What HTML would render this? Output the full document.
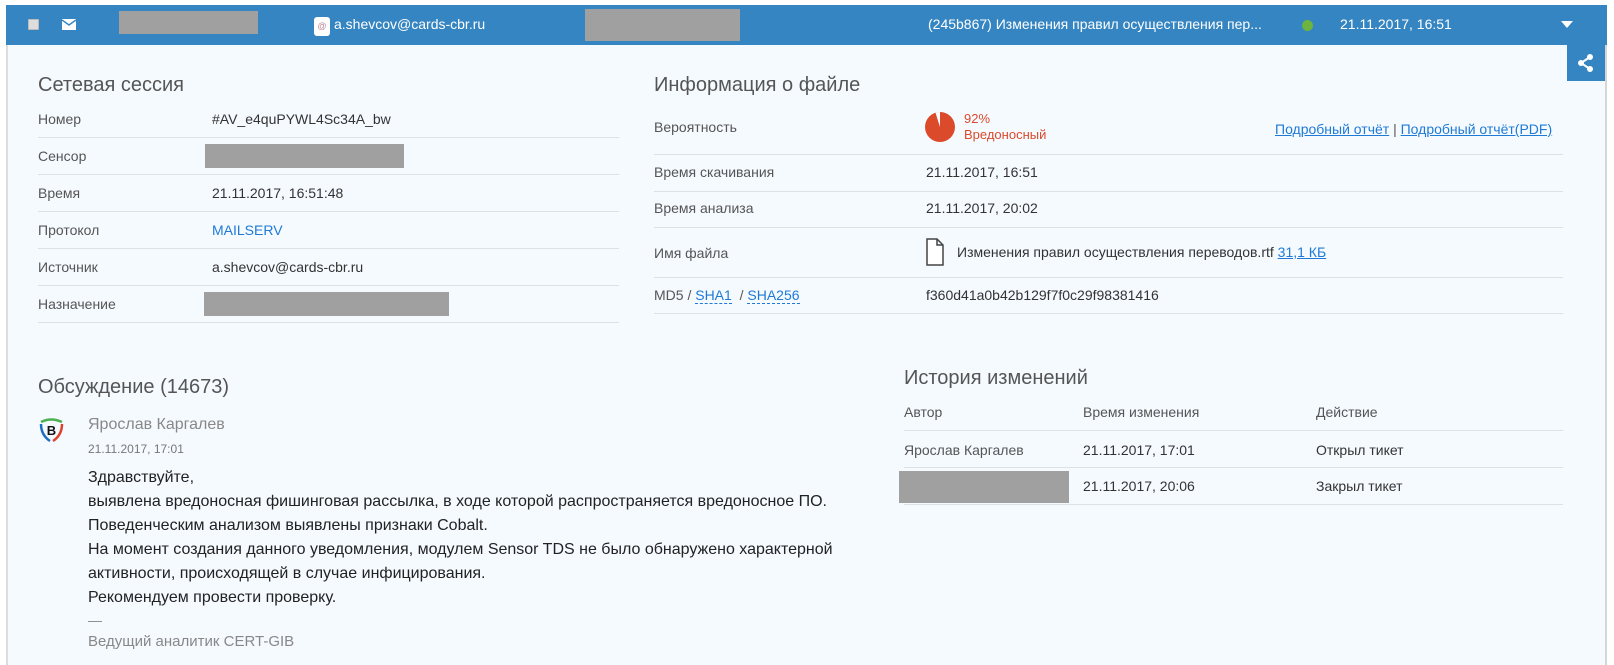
<!DOCTYPE html>
<html><head><meta charset="utf-8"><style>
*{box-sizing:border-box;margin:0;padding:0}
body{width:1614px;height:654px;background:#fff;font-family:"Liberation Sans","Noto Sans CJK SC",sans-serif;color:#333;position:relative;overflow:hidden;font-size:14px}
.a{position:absolute;white-space:nowrap}
#panel{position:absolute;left:6px;top:5px;width:1601px;height:660px;background:#f5faff;border-left:2px solid #ddd;border-right:2px solid #d6d6d6}
#bar{position:absolute;left:6px;top:5px;width:1601px;height:40px;background:#3485c1;color:#fff}
.grey{position:absolute;background:#a0a0a0}
.h{font-size:20px;color:#555;font-weight:300}
.line{position:absolute;height:1px;background:#dde1e5}
.lbl{color:#555;font-size:14px}
.lnk{color:#1f7ad6;text-decoration:underline}
.dash{color:#1f7ad6;border-bottom:1px dashed #1f7ad6}
</style></head><body>
<div id="panel"></div>
<div id="bar">
  <div class="a" style="left:22px;top:14px;width:11px;height:11px;background:#ddd;border:1px solid #bbb;border-radius:1px"></div>
  <svg class="a" style="left:56px;top:14px" width="14" height="11" viewBox="0 0 14 11"><rect x="0" y="0" width="14" height="11" fill="#fff"/><path d="M0 1 L7 6 L14 1" stroke="#3485c1" stroke-width="1.4" fill="none"/></svg>
  <div class="grey" style="left:113px;top:6px;width:139px;height:23px"></div>
  <div class="a" style="left:308px;top:12px;width:16px;height:19px;background:#fff;border-radius:3px;font-size:9px;text-align:center;line-height:19px;color:#b89">@</div>
  <div class="a" style="left:328px;top:11px;font-size:14px">a.shevcov@cards-cbr.ru</div>
  <div class="grey" style="left:579px;top:4px;width:155px;height:32px"></div>
  <div class="a" style="left:922px;top:11px;font-size:14px">(245b867) Изменения правил осуществления пер...</div>
  <div class="a" style="left:1296px;top:15px;width:11px;height:11px;border-radius:50%;background:#6cb33f"></div>
  <div class="a" style="left:1334px;top:11px;font-size:14px">21.11.2017, 16:51</div>
  <div class="a" style="left:1555px;top:16px;width:0;height:0;border-left:6px solid transparent;border-right:6px solid transparent;border-top:7px solid #fff"></div>
</div>
<div class="a" style="left:1567px;top:45px;width:38px;height:36px;background:#3485c1">
<svg width="38" height="36" viewBox="0 0 38 36"><g fill="#fff"><circle cx="23" cy="12" r="3"/><circle cx="14" cy="18" r="3"/><circle cx="23" cy="24" r="3"/></g><path d="M23 12 L14 18 L23 24" stroke="#fff" stroke-width="2" fill="none"/></svg></div>

<div class="a h" style="left:38px;top:74px">Сетевая сессия</div>
<div class="a lbl" style="left:38px;top:111px">Номер</div><div class="a" style="left:212px;top:111px">#AV_e4quPYWL4Sc34A_bw</div>
<div class="line" style="left:38px;top:137px;width:581px"></div>
<div class="a lbl" style="left:38px;top:148px">Сенсор</div><div class="grey" style="left:205px;top:144px;width:199px;height:24px"></div>
<div class="line" style="left:38px;top:174px;width:581px"></div>
<div class="a lbl" style="left:38px;top:185px">Время</div><div class="a" style="left:212px;top:185px">21.11.2017, 16:51:48</div>
<div class="line" style="left:38px;top:211px;width:581px"></div>
<div class="a lbl" style="left:38px;top:222px">Протокол</div><div class="a" style="left:212px;top:222px;color:#1f7ad6">MAILSERV</div>
<div class="line" style="left:38px;top:248px;width:581px"></div>
<div class="a lbl" style="left:38px;top:259px">Источник</div><div class="a" style="left:212px;top:259px">a.shevcov@cards-cbr.ru</div>
<div class="line" style="left:38px;top:285px;width:581px"></div>
<div class="a lbl" style="left:38px;top:296px">Назначение</div><div class="grey" style="left:204px;top:292px;width:245px;height:24px"></div>
<div class="line" style="left:38px;top:322px;width:581px"></div>

<div class="a h" style="left:654px;top:74px">Информация о файле</div>
<div class="a lbl" style="left:654px;top:119px">Вероятность</div>
<svg class="a" style="left:925px;top:112px" width="30" height="30" viewBox="0 0 30 30"><circle cx="15" cy="15" r="15" fill="#dc4a2c"/><path d="M15 15 L15 0 A15 15 0 0 0 10.5 0.7 Z" fill="#fff"/></svg>
<div class="a" style="left:964px;top:111px;color:#dc4a2c;font-size:13px;line-height:16px">92%<br>Вредоносный</div>
<div class="a" style="left:1275px;top:121px;color:#555;font-size:14px"><span class="lnk">Подробный отчёт</span> | <span class="lnk">Подробный отчёт(PDF)</span></div>
<div class="line" style="left:654px;top:154px;width:909px"></div>
<div class="a lbl" style="left:654px;top:164px">Время скачивания</div><div class="a" style="left:926px;top:164px">21.11.2017, 16:51</div>
<div class="line" style="left:654px;top:191px;width:909px"></div>
<div class="a lbl" style="left:654px;top:200px">Время анализа</div><div class="a" style="left:926px;top:200px">21.11.2017, 20:02</div>
<div class="line" style="left:654px;top:227px;width:909px"></div>
<div class="a lbl" style="left:654px;top:245px">Имя файла</div>
<svg class="a" style="left:926px;top:238px" width="18" height="28" viewBox="0 0 18 28"><path d="M1 1 H11 L17 7 V27 H1 Z M11 1 V7 H17" fill="#fff" stroke="#444" stroke-width="1.5"/></svg>
<div class="a" style="left:957px;top:244px">Изменения правил осуществления переводов.rtf <span class="lnk">31,1 КБ</span></div>
<div class="line" style="left:654px;top:277px;width:909px"></div>
<div class="a lbl" style="left:654px;top:287px">MD5 / <span class="dash">SHA1</span> &nbsp;/ <span class="dash">SHA256</span></div>
<div class="a" style="left:926px;top:287px">f360d41a0b42b129f7f0c29f98381416</div>
<div class="line" style="left:654px;top:313px;width:909px"></div>

<div class="a h" style="left:38px;top:376px">Обсуждение (14673)</div>
<svg class="a" style="left:38px;top:417px" width="27" height="26" viewBox="0 0 27 26"><path d="M3 5 Q13 0 24 5" stroke="#4caf50" stroke-width="2.5" fill="none"/><path d="M3 7 Q3 18 12 24" stroke="#1e6fc0" stroke-width="2.5" fill="none"/><path d="M24 7 Q24 18 15 24" stroke="#e0412e" stroke-width="2.5" fill="none"/><text x="13.5" y="18" font-size="13" font-weight="bold" text-anchor="middle" font-family="Liberation Sans" fill="#111">B</text></svg>
<div class="a" style="left:88px;top:416px;font-size:16px;color:#888">Ярослав Каргалев</div>
<div class="a" style="left:88px;top:442px;font-size:12px;color:#777">21.11.2017, 17:01</div>
<div class="a" style="left:88px;top:466px;font-size:16px;line-height:24px;color:#222">Здравствуйте,<br>выявлена вредоносная фишинговая рассылка, в ходе которой распространяется вредоносное ПО.<br>Поведенческим анализом выявлены признаки Cobalt.<br>На момент создания данного уведомления, модулем Sensor TDS не было обнаружено характерной<br>активности, происходящей в случае инфицирования.<br>Рекомендуем провести проверку.</div>
<div class="a" style="left:88px;top:612px;font-size:14px;color:#888">—</div>
<div class="a" style="left:88px;top:633px;font-size:15px;color:#888">Ведущий аналитик CERT-GIB</div>

<div class="a h" style="left:904px;top:367px">История изменений</div>
<div class="a lbl" style="left:904px;top:404px">Автор</div><div class="a lbl" style="left:1083px;top:404px">Время изменения</div><div class="a lbl" style="left:1316px;top:404px">Действие</div>
<div class="line" style="left:904px;top:430px;width:659px"></div>
<div class="a lbl" style="left:904px;top:442px">Ярослав Каргалев</div><div class="a" style="left:1083px;top:442px">21.11.2017, 17:01</div><div class="a" style="left:1316px;top:442px">Открыл тикет</div>
<div class="line" style="left:904px;top:467px;width:659px"></div>
<div class="grey" style="left:899px;top:471px;width:170px;height:32px"></div>
<div class="a" style="left:1083px;top:478px">21.11.2017, 20:06</div><div class="a" style="left:1316px;top:478px">Закрыл тикет</div>
<div class="line" style="left:904px;top:504px;width:659px"></div>
</body></html>
